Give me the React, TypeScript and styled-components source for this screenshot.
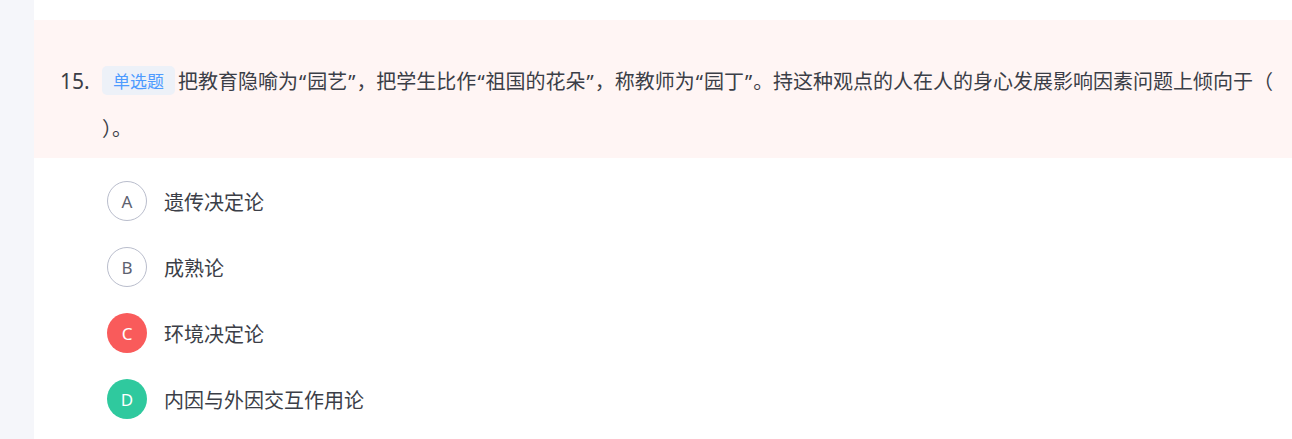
import React from "react";
import styled, { createGlobalStyle } from "styled-components";

const Global = createGlobalStyle`
  html, body { margin: 0; padding: 0; background: #f5f6fa; }
  body { font-family: "Noto Sans", "Noto Sans CJK SC", sans-serif; }
`;

const Page = styled.div`
  display: flex;
  min-height: 439px;
  background: #f5f6fa;
  padding-left: 34px;
`;

const Card = styled.div`
  flex: 1;
  background: #ffffff;
  padding-top: 20px;
`;

const QuestionBand = styled.div`
  background: #fff5f4;
  display: flex;
  padding: 38px 8px 7px 26px;
`;

const Number = styled.div`
  width: 42px;
  flex: none;
  font-family: "Noto Sans", sans-serif;
  font-size: 21px;
  line-height: 46px;
  color: #3b3e47;
`;

const Stem = styled.div`
  flex: 1;
  font-family: "Noto Sans CJK SC", sans-serif;
  font-size: 20px;
  line-height: 46px;
  color: #3b3e47;
`;

const Quote = styled.span`
  font-family: "Noto Sans", sans-serif;
  padding: 0 1px;
`;

const Tag = styled.span`
  display: inline-block;
  background: #edf1f8;
  color: #4d9bff;
  font-size: 17px;
  line-height: 29px;
  padding: 0 11px;
  border-radius: 5px;
  margin-right: 3px;
  vertical-align: 1px;
`;

const Options = styled.div`
  display: flex;
  flex-direction: column;
  padding: 10px 0 0 73px;
`;

const OptionRow = styled.div`
  height: 66px;
  display: flex;
  align-items: center;
  gap: 17px;
`;

type Tone = "plain" | "wrong" | "right";

const Badge = styled.div<{ $tone: Tone }>`
  width: 40px;
  height: 40px;
  box-sizing: border-box;
  border-radius: 50%;
  display: flex;
  align-items: center;
  justify-content: center;
  font-family: "Noto Sans", sans-serif;
  font-size: 17px;
  border: ${(p) => (p.$tone === "plain" ? "1px solid #b9bdcc" : "none")};
  background: ${(p) =>
    p.$tone === "wrong" ? "#f95b5b" : p.$tone === "right" ? "#2fc99e" : "#ffffff"};
  color: ${(p) => (p.$tone === "plain" ? "#5d6170" : "#ffffff")};
`;

const OptionText = styled.span`
  font-family: "Noto Sans CJK SC", sans-serif;
  font-size: 20px;
  color: #3b3e47;
`;

const options: { key: string; text: string; tone: Tone }[] = [
  { key: "A", text: "遗传决定论", tone: "plain" },
  { key: "B", text: "成熟论", tone: "plain" },
  { key: "C", text: "环境决定论", tone: "wrong" },
  { key: "D", text: "内因与外因交互作用论", tone: "right" },
];

export default function App() {
  return (
    <>
      <Global />
      <Page>
        <Card>
          <QuestionBand>
            <Number>15.</Number>
            <Stem lang="zh-CN">
              <Tag>单选题</Tag>
              把教育隐喻为<Quote>“</Quote>园艺<Quote>”</Quote>，把学生比作<Quote>“</Quote>祖国的花朵<Quote>”</Quote>，称教师为<Quote>“</Quote>园丁<Quote>”</Quote>。持这种观点的人在人的身心发展影响因素问题上倾向于（ ）。
            </Stem>
          </QuestionBand>
          <Options>
            {options.map((o) => (
              <OptionRow key={o.key}>
                <Badge $tone={o.tone}>{o.key}</Badge>
                <OptionText>{o.text}</OptionText>
              </OptionRow>
            ))}
          </Options>
        </Card>
      </Page>
    </>
  );
}
